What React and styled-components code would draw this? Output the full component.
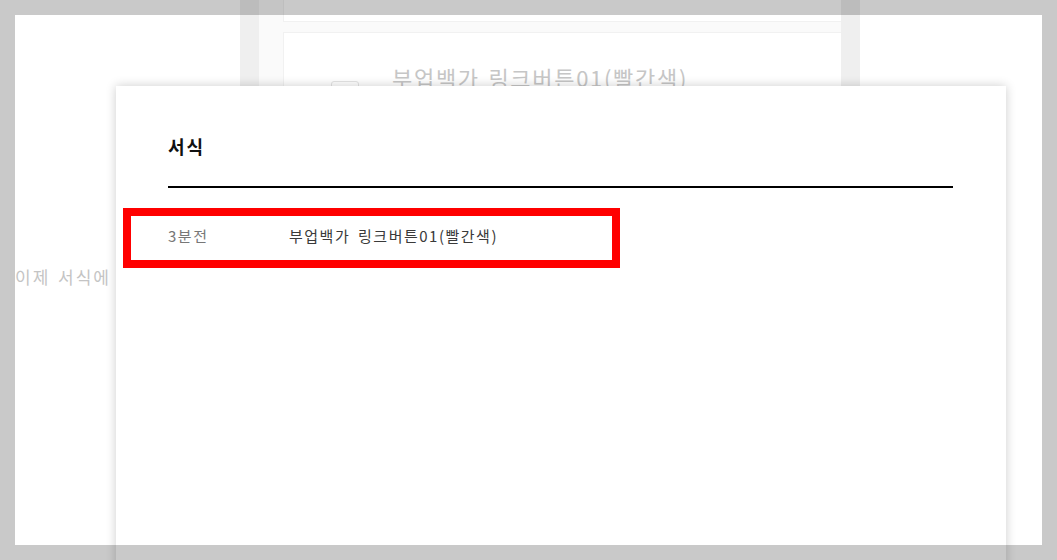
import React from "react";
import styled, { createGlobalStyle } from "styled-components";

const GlobalStyle = createGlobalStyle`
  html, body, #root { margin: 0; padding: 0; height: 100%; }
  body {
    font-family: "Noto Sans CJK KR", "Noto Sans", sans-serif;
    background: #fff;
    overflow: hidden;
  }
`;

const Stage = styled.div`
  position: relative;
  width: 100vw;
  height: 100vh;
  overflow: hidden;
  background: #fff;
`;

const Backdrop = styled.div`
  display: grid;
  grid-template-columns: 240px 620px 1fr;
  height: 100%;
`;

const LeftColumn = styled.div`
  padding: 262px 0 0 15px;
  white-space: nowrap;
  font-size: 17px;
  line-height: 30px;
  color: #c4c4c4;
  letter-spacing: 2px;
  word-spacing: 2px;
`;

const Panel = styled.div`
  display: grid;
  grid-template-columns: 19px 1fr 19px;
  height: 100%;
`;

const Strip = styled.div`
  background: #efefef;
`;

const PanelBody = styled.div`
  background: #fafafa;
  padding-left: 24px;
  display: flex;
  flex-direction: column;
  gap: 10px;
  margin-top: -20px;
`;

const Card = styled.div`
  background: #fff;
  border: 1px solid #f1f1f1;
  border-right: none;
  height: ${(p) => p.$h}px;
  display: flex;
  align-items: flex-start;
  padding: ${(p) => p.$pad || "0"};
  gap: 33px;
`;

const FakeCheck = styled.div`
  width: 26px;
  height: 26px;
  border: 1px solid #e4e4e4;
  border-radius: 3px;
  margin-top: 48px;
  flex: none;
`;

const GhostTitle = styled.div`
  font-size: 22px;
  line-height: 32px;
  color: #c6c6c6;
  margin-top: 28px;
  white-space: nowrap;
  letter-spacing: 1.7px;
  word-spacing: 2px;
`;

const Modal = styled.div`
  position: absolute;
  left: 116px;
  top: 86px;
  width: 890px;
  height: 520px;
  background: #fff;
  box-shadow: 0 0 10px rgba(0, 0, 0, 0.2);
  padding: 47px 53px 0 52px;
  box-sizing: border-box;
`;

const Title = styled.h2`
  margin: 0;
  font-size: 18px;
  line-height: 26px;
  font-weight: 700;
  letter-spacing: 2px;
  color: #111;
  padding-bottom: 27px;
  border-bottom: 2px solid #000;
`;

const List = styled.ul`
  list-style: none;
  margin: 0;
  padding: 24px 0 0;
`;

const Row = styled.li`
  display: flex;
  align-items: center;
  padding: 14px 0;
  font-size: 15px;
  line-height: 20px;
  letter-spacing: 1.5px;
`;

const Time = styled.span`
  width: 121px;
  flex: none;
  color: #777;
`;

const Name = styled.span`
  color: #3a3a3a;
  word-spacing: 3px;
`;

const Frame = styled.div`
  position: absolute;
  inset: 0;
  border: 15px solid rgba(0, 0, 0, 0.21);
  pointer-events: none;
`;

const Highlight = styled.div`
  position: absolute;
  left: 123px;
  top: 208px;
  width: 497px;
  height: 60px;
  border: 8px solid #ff0000;
  box-sizing: border-box;
  pointer-events: none;
`;

export default function App() {
  return (
    <>
      <GlobalStyle />
      <Stage>
        <Backdrop>
          <LeftColumn>이제 서식에 저장된 내용을 불러옵니다</LeftColumn>
          <Panel>
            <Strip />
            <PanelBody>
              <Card $h={40} />
              <Card $h={200} $pad="0 0 0 47px">
                <FakeCheck />
                <GhostTitle>부업백가 링크버튼01(빨간색)</GhostTitle>
              </Card>
            </PanelBody>
            <Strip />
          </Panel>
          <div />
        </Backdrop>
        <Modal>
          <Title>서식</Title>
          <List>
            <Row>
              <Time>3분전</Time>
              <Name>부업백가 링크버튼01(빨간색)</Name>
            </Row>
          </List>
        </Modal>
        <Highlight />
        <Frame />
      </Stage>
    </>
  );
}
